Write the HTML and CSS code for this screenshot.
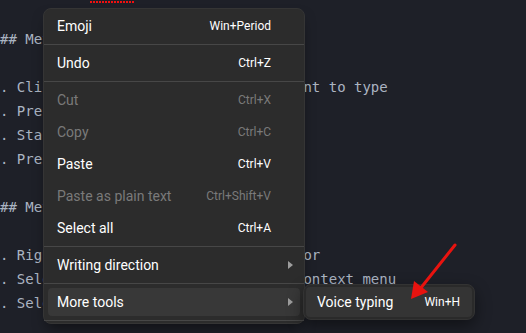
FILE: index.html
```html
<!DOCTYPE html>
<html>
<head>
<meta charset="utf-8">
<link rel="stylesheet" href="styles.css">
</head>
<body>
<div class="editor">
  <div class="line"># Dictation <span class="misspelt">testt</span></div>
  <div class="line"> </div>
  <div class="line">### Method 1: Keyboard shortcut</div>
  <div class="line"> </div>
  <div class="line">1. Click in the text box where you want to type</div>
  <div class="line">2. Press Win+H</div>
  <div class="line">3. Start speaking</div>
  <div class="line">4. Press Win+H to stop</div>
  <div class="line"> </div>
  <div class="line">### Method 2: Context menu</div>
  <div class="line"> </div>
  <div class="line">1. Right-click somewhere in your editor</div>
  <div class="line">2. Select More tools entry from the context menu</div>
  <div class="line">3. Select Voice typing</div>
</div>

<div class="menu">
  <div class="item"><span class="label">Emoji</span><span class="key">Win+Period</span><span class="chev"></span></div>
  <div class="sep"></div>
  <div class="item"><span class="label">Undo</span><span class="key">Ctrl+Z</span><span class="chev"></span></div>
  <div class="sep"></div>
  <div class="item disabled"><span class="label">Cut</span><span class="key">Ctrl+X</span><span class="chev"></span></div>
  <div class="item disabled"><span class="label">Copy</span><span class="key">Ctrl+C</span><span class="chev"></span></div>
  <div class="item"><span class="label">Paste</span><span class="key">Ctrl+V</span><span class="chev"></span></div>
  <div class="item disabled"><span class="label">Paste as plain text</span><span class="key">Ctrl+Shift+V</span><span class="chev"></span></div>
  <div class="item"><span class="label">Select all</span><span class="key">Ctrl+A</span><span class="chev"></span></div>
  <div class="sep"></div>
  <div class="item"><span class="label">Writing direction</span><span class="key"></span><span class="chev"><i class="tri"></i></span></div>
  <div class="sep"></div>
  <div class="item active"><span class="label">More tools</span><span class="key"></span><span class="chev"><i class="tri"></i></span></div>
  <div class="sep"></div>
</div>

<div class="submenu">
  <div class="subitem"><span class="label">Voice typing</span><span class="key">Win+H</span></div>
</div>

<svg class="pointer" width="526" height="333" viewBox="0 0 526 333">
  <line x1="455" y1="245" x2="420" y2="289" stroke="#e8130f" stroke-width="3" stroke-linecap="round"/>
  <polygon points="411,299 414,281 428,292" fill="#e8130f"/>
</svg>
</body>
</html>
```

FILE: styles.css
```css
html, body {
  margin: 0;
  padding: 0;
  background: #1e2028;
  overflow: hidden;
  width: 526px;
  height: 333px;
}

.editor {
  margin-top: -21px;
  margin-left: -8.43px;
  font-family: "DejaVu Sans Mono", monospace;
  font-size: 14px;
  line-height: 24px;
  color: #abb4c2;
}

.line {
  white-space: pre;
  height: 24px;
}

.misspelt {
  padding: 0 0 4px 3px;
  margin-left: -3px;
  background-image: repeating-linear-gradient(90deg, #f01010 0 2px, transparent 2px 3px);
  background-size: 100% 2px;
  background-position: left bottom;
  background-repeat: no-repeat;
}

.menu {
  position: absolute;
  left: 43px;
  top: 8px;
  width: 262px;
  box-sizing: border-box;
  display: flex;
  flex-direction: column;
  padding: 1px 0 0;
  background: #2c2c2c;
  border: 1px solid #353535;
  border-radius: 8px;
  box-shadow: 0 8px 14px -4px rgba(0, 0, 0, 0.5);
  font-family: Roboto, "Noto Sans", sans-serif;
  color: #ffffff;
}

.item {
  display: flex;
  align-items: center;
  height: 28px;
  margin: 2px 4px;
  padding-left: 9px;
  border-radius: 4px;
  font-size: 14px;
}

.item .label {
  flex: 1;
}

.key {
  font-size: 12px;
  color: #ffffff;
}

.chev {
  width: 29px;
  display: flex;
  align-items: center;
  padding-left: 17px;
  box-sizing: border-box;
}

.tri {
  display: block;
  width: 0;
  height: 0;
  border-left: 5px solid #9d9d9d;
  border-top: 4px solid transparent;
  border-bottom: 4px solid transparent;
}

.item.disabled,
.item.disabled .key {
  color: #7a7a7a;
}

.item.active {
  background: #383838;
}

.sep {
  height: 1px;
  background: #474747;
  margin: 2px 0;
}

.submenu {
  position: absolute;
  left: 303px;
  top: 284px;
  width: 172px;
  height: 36px;
  box-sizing: border-box;
  padding: 2px;
  background: #2a2a2a;
  border: 1px solid #333333;
  border-radius: 8px;
  box-shadow: 0 6px 16px rgba(0, 0, 0, 0.45);
  font-family: Roboto, "Noto Sans", sans-serif;
  color: #ffffff;
}

.subitem {
  display: flex;
  align-items: center;
  height: 30px;
  padding: 0 12px 0 11px;
  border-radius: 4px;
  background: #343434;
  font-size: 14px;
}

.subitem .label {
  flex: 1;
}

.pointer {
  position: absolute;
  left: 0;
  top: 0;
  pointer-events: none;
}
```
